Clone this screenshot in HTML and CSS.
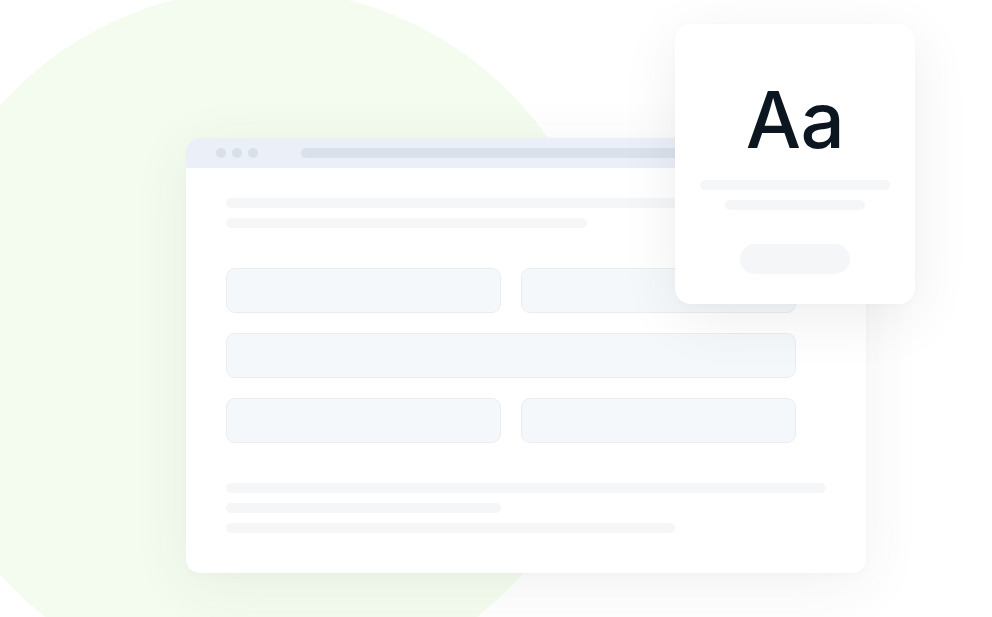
FILE: index.html
```html
<!DOCTYPE html>
<html lang="en">
<head>
<meta charset="utf-8">
<title>Font preview illustration</title>
<link rel="stylesheet" href="styles.css">
</head>
<body>
<div class="stage">
  <div class="blob"></div>

  <div class="window">
    <div class="win-header">
      <div class="dots">
        <span class="dot"></span><span class="dot"></span><span class="dot"></span>
      </div>
      <div class="url"></div>
    </div>
    <div class="win-body">
      <div class="lines">
        <div class="line w600"></div>
        <div class="line w361"></div>
      </div>
      <div class="fields">
        <div class="field"></div>
        <div class="field"></div>
        <div class="field wide"></div>
        <div class="field"></div>
        <div class="field"></div>
      </div>
      <div class="lines">
        <div class="line w600"></div>
        <div class="line w275"></div>
        <div class="line w449"></div>
      </div>
    </div>
  </div>

  <div class="font-card">
    <div class="sample">Aa</div>
    <div class="card-line l1"></div>
    <div class="card-line l2"></div>
    <div class="pill"></div>
  </div>
</div>
</body>
</html>
```

FILE: styles.css
```css
* { box-sizing: border-box; }

html, body {
  margin: 0;
  padding: 0;
  background: #ffffff;
}

.stage {
  position: relative;
  width: 992px;
  height: 617px;
  overflow: hidden;
  background: #ffffff;
  padding: 138px 0 0 186px;
}

.blob {
  position: absolute;
  left: -90px;
  top: -11px;
  width: 702px;
  height: 702px;
  border-radius: 50%;
  background: #f4fcef;
}

.window {
  position: relative;
  width: 680px;
  height: 435px;
  background: #ffffff;
  border-radius: 14px;
  overflow: hidden;
  box-shadow: 0 12px 60px rgba(60, 70, 60, 0.07), 0 2px 10px rgba(0, 0, 0, 0.02);
}

.win-header {
  height: 30px;
  background: #ebf0f8;
  display: flex;
  align-items: center;
  padding-left: 30px;
}

.dots {
  display: flex;
  gap: 6px;
}

.dot {
  width: 10px;
  height: 10px;
  border-radius: 50%;
  background: #d8e0ea;
}

.url {
  margin-left: 43px;
  width: 530px;
  height: 10px;
  border-radius: 5px;
  background: #d9e2eb;
}

.win-body {
  padding: 30px 40px;
  display: flex;
  flex-direction: column;
  gap: 40px;
}

.lines {
  display: flex;
  flex-direction: column;
  gap: 10px;
}

.line {
  height: 10px;
  border-radius: 5px;
  background: #f4f6f8;
}

.w600 { width: 600px; }
.w361 { width: 361px; }
.w275 { width: 275px; }
.w449 { width: 449px; }

.fields {
  display: grid;
  grid-template-columns: 275px 275px;
  grid-auto-rows: 45px;
  gap: 20px;
}

.field {
  border: 1px solid #e9edf2;
  background: #f5f8fb;
  border-radius: 9px;
}

.field.wide {
  grid-column: 1 / span 2;
}

.font-card {
  position: absolute;
  left: 675px;
  top: 24px;
  width: 240px;
  height: 280px;
  background: #ffffff;
  border-radius: 16px;
  box-shadow: 0 14px 60px rgba(0, 0, 0, 0.07), 0 2px 8px rgba(0, 0, 0, 0.015);
  display: flex;
  flex-direction: column;
  align-items: center;
  padding-top: 57px;
}

.sample {
  font-family: Inter, "Noto Sans", sans-serif;
  font-weight: 500;
  font-size: 78px;
  line-height: 78px;
  height: 78px;
  color: #0b1621;
  letter-spacing: -0.5px;
}

.card-line {
  height: 10px;
  border-radius: 5px;
  background: #f4f6f8;
}

.card-line.l1 {
  width: 190px;
  margin-top: 21px;
}

.card-line.l2 {
  width: 140px;
  margin-top: 10px;
}

.pill {
  width: 110px;
  height: 30px;
  border-radius: 15px;
  background: #f4f6f8;
  margin-top: 34px;
}
```
